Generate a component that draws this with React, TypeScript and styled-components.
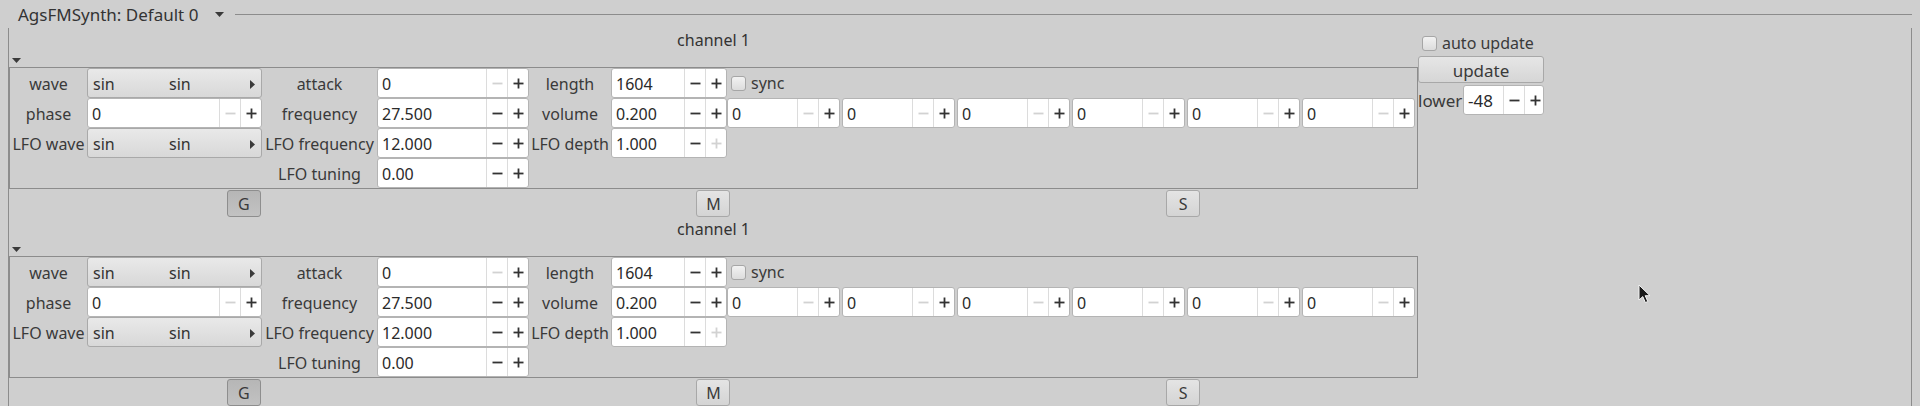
import styled, { createGlobalStyle } from 'styled-components';

const GlobalStyle = createGlobalStyle`
  html, body {
    margin: 0;
    padding: 0;
    background: #cfcfcf;
  }
  body {
    font-family: "Noto Sans", "DejaVu Sans", sans-serif;
    font-size: 16px;
    color: #363636;
  }
`;

const COLS = '77px 175px 115px 152px 82px 116px 1fr';

function Minus({ off }: { off?: boolean }) {
  return (
    <svg width="11" height="11" viewBox="0 0 11 11">
      <line x1="0.5" y1="5.5" x2="10.5" y2="5.5" stroke={off ? '#d2d2d2' : '#333'} strokeWidth="1.8" />
    </svg>
  );
}

function Plus({ off }: { off?: boolean }) {
  const c = off ? '#d2d2d2' : '#333';
  return (
    <svg width="11" height="11" viewBox="0 0 11 11">
      <line x1="0.5" y1="5.5" x2="10.5" y2="5.5" stroke={c} strokeWidth="1.8" />
      <line x1="5.5" y1="0.5" x2="5.5" y2="10.5" stroke={c} strokeWidth="1.8" />
    </svg>
  );
}

function DownCaret() {
  return (
    <svg width="9" height="5" viewBox="0 0 9 5">
      <path d="M0 0 L9 0 L4.5 5 Z" fill="#3a3a3a" />
    </svg>
  );
}

function RightCaret() {
  return (
    <svg width="5" height="9" viewBox="0 0 5 9">
      <path d="M0 0 L5 4.5 L0 9 Z" fill="#3a3a3a" />
    </svg>
  );
}

type SpinProps = {
  value: string;
  minusOff?: boolean;
  plusOff?: boolean;
  width?: number;
  textWidth?: number;
  big?: boolean;
};

function Spin({ value, minusOff, plusOff, width, textWidth, big }: SpinProps) {
  return (
    <SpinBox $width={width}>
      <SpinText $width={textWidth} $big={big}>
        {value}
      </SpinText>
      <StepButton>
        <Minus off={minusOff} />
      </StepButton>
      <StepButton>
        <Plus off={plusOff} />
      </StepButton>
    </SpinBox>
  );
}

function Combo() {
  return (
    <ComboButton>
      <ComboText>sin</ComboText>
      <ComboText $grow>sin</ComboText>
      <RightCaret />
    </ComboButton>
  );
}

function CheckLabel({ text }: { text: string }) {
  return (
    <CheckRow>
      <CheckBox />
      <span>{text}</span>
    </CheckRow>
  );
}

function ChannelBlock() {
  return (
    <Block>
      <ChannelLabel>channel 1</ChannelLabel>
      <ExpanderRow>
        <DownCaret />
      </ExpanderRow>
      <ParamBox>
        <Row>
          <Label>wave</Label>
          <Combo />
          <Label>attack</Label>
          <Spin value="0" minusOff />
          <Label>length</Label>
          <Spin value="1604" />
          <SyncCell>
            <CheckLabel text="sync" />
          </SyncCell>
        </Row>
        <Row>
          <Label>phase</Label>
          <Spin value="0" minusOff />
          <Label>frequency</Label>
          <Spin value="27.500" />
          <Label>volume</Label>
          <Spin value="0.200" />
          <ExtraSpins>
            {[0, 1, 2, 3, 4, 5].map((i) => (
              <Spin key={i} value="0" minusOff width={113} />
            ))}
          </ExtraSpins>
        </Row>
        <Row>
          <Label>LFO wave</Label>
          <Combo />
          <Label>LFO frequency</Label>
          <Spin value="12.000" />
          <Label>LFO depth</Label>
          <Spin value="1.000" plusOff />
          <span />
        </Row>
        <Row>
          <span />
          <span />
          <Label>LFO tuning</Label>
          <Spin value="0.00" />
          <span />
          <span />
          <span />
        </Row>
      </ParamBox>
      <ToggleRow>
        <ToggleButton $pressed>G</ToggleButton>
        <ToggleButton>M</ToggleButton>
        <ToggleButton>S</ToggleButton>
      </ToggleRow>
    </Block>
  );
}

export default function App() {
  return (
    <Page>
      <GlobalStyle />
      <Frame>
        <FrameHead>
          <Title>AgsFMSynth: Default 0</Title>
          <HeadCaret>
            <DownCaret />
          </HeadCaret>
          <HeadLine />
        </FrameHead>
        <FrameBody>
          <Channels>
            <ChannelBlock />
            <ChannelBlock />
          </Channels>
          <SidePanel>
            <AutoRow>
              <CheckLabel text="auto update" />
            </AutoRow>
            <UpdateButton>update</UpdateButton>
            <LowerRow>
              <LowerLabel>lower</LowerLabel>
              <Spin value="-48" width={81} textWidth={40} big />
            </LowerRow>
          </SidePanel>
        </FrameBody>
      </Frame>
      <Cursor>
        <svg width="13" height="20" viewBox="0 0 13 20">
          <path
            d="M1 1 L1 16 L4.8 12.6 L7.4 18.6 L9.8 17.5 L7.2 11.7 L12 11.7 Z"
            fill="#1a1a1a"
            stroke="#f4f4f4"
            strokeWidth="1"
            strokeLinejoin="round"
          />
        </svg>
      </Cursor>
    </Page>
  );
}

const Page = styled.div`
  position: relative;
  width: 1920px;
  height: 406px;
  overflow: hidden;
  padding-left: 8px;
  box-sizing: border-box;
`;

const Frame = styled.div`
  display: flex;
  flex-direction: column;
  width: 1904px;
`;

const FrameHead = styled.div`
  display: flex;
  align-items: center;
  height: 28px;
`;

const Title = styled.span`
  margin-left: 10px;
  font-size: 17px;
  white-space: nowrap;
  color: #333;
`;

const HeadCaret = styled.span`
  display: flex;
  margin-left: 17px;
  margin-right: 11px;
`;

const HeadLine = styled.div`
  flex: 1;
  border-top: 1px solid #8c8c8c;
  margin-top: 1px;
`;

const FrameBody = styled.div`
  display: flex;
  border-left: 1px solid #8c8c8c;
  border-right: 1px solid #8c8c8c;
  height: 378px;
`;

const Channels = styled.div`
  display: flex;
  flex-direction: column;
  width: 1409px;
`;

const Block = styled.div`
  display: flex;
  flex-direction: column;
  height: 189px;
`;

const ChannelLabel = styled.div`
  height: 24px;
  line-height: 25px;
  text-align: center;
  color: #333;
`;

const ExpanderRow = styled.div`
  height: 15px;
  display: flex;
  align-items: flex-start;
  padding: 6px 0 0 3px;
  box-sizing: border-box;
`;

const ParamBox = styled.div`
  height: 122px;
  box-sizing: border-box;
  border: 1px solid #8c8c8c;
  display: flex;
  flex-direction: column;
`;

const Row = styled.div`
  display: grid;
  grid-template-columns: ${COLS};
  height: 30px;
  align-items: start;
`;

const Label = styled.div`
  height: 30px;
  line-height: 32px;
  text-align: center;
  white-space: nowrap;
  color: #3a3a3a;
`;

const SpinBox = styled.div<{ $width?: number }>`
  display: flex;
  box-sizing: border-box;
  height: 30px;
  width: ${(p) => (p.$width ? `${p.$width}px` : '100%')};
  background: #ffffff;
  border: 1px solid #b4b4b4;
  border-radius: 3px;
`;

const SpinText = styled.div<{ $width?: number; $big?: boolean }>`
  flex: ${(p) => (p.$width ? 'none' : '1')};
  width: ${(p) => (p.$width ? `${p.$width - 1}px` : 'auto')};
  padding-left: 4px;
  box-sizing: border-box;
  font-size: ${(p) => (p.$big ? '17px' : '16px')};
  line-height: 30px;
  color: #2a2a2a;
  overflow: hidden;
  white-space: nowrap;
`;

const StepButton = styled.div`
  width: 20px;
  flex: none;
  display: flex;
  align-items: center;
  justify-content: center;
  border-left: 1px solid #dcdcdc;
`;

const ComboButton = styled.div`
  display: flex;
  align-items: center;
  box-sizing: border-box;
  height: 30px;
  padding: 2px 6px 0 5px;
  background: linear-gradient(#e9e9e9, #d8d8d8);
  border: 1px solid #a9a9a9;
  border-radius: 3px;
  color: #333;
`;

const ComboText = styled.span<{ $grow?: boolean }>`
  width: ${(p) => (p.$grow ? 'auto' : '76px')};
  flex: ${(p) => (p.$grow ? '1' : 'none')};
`;

const SyncCell = styled.div`
  height: 30px;
  display: flex;
  align-items: center;
  padding-left: 4px;
`;

const CheckRow = styled.label`
  display: flex;
  align-items: center;
  gap: 5px;
  color: #3a3a3a;
  white-space: nowrap;
`;

const CheckBox = styled.span`
  display: inline-block;
  width: 15px;
  height: 15px;
  box-sizing: border-box;
  border: 1px solid #a6a6a6;
  border-radius: 3px;
  background: linear-gradient(#f2f2f2, #dcdcdc);
`;

const ExtraSpins = styled.div`
  display: flex;
  gap: 2px;
`;

const ToggleRow = styled.div`
  display: grid;
  grid-template-columns: 1fr 1fr 1fr;
  justify-items: center;
  height: 28px;
  padding-top: 1px;
  box-sizing: border-box;
`;

const ToggleButton = styled.div<{ $pressed?: boolean }>`
  width: 34px;
  height: 27px;
  box-sizing: border-box;
  display: flex;
  align-items: center;
  justify-content: center;
  padding-top: 1px;
  border-radius: 3px;
  border: 1px solid ${(p) => (p.$pressed ? '#8e8e8e' : '#a8a8a8')};
  background: ${(p) =>
    p.$pressed ? 'linear-gradient(#b6b6b6, #c2c2c2)' : 'linear-gradient(#e4e4e4, #d4d4d4)'};
  color: #3a3a3a;
`;

const SidePanel = styled.div`
  display: flex;
  flex-direction: column;
  width: 126px;
  padding-top: 5px;
`;

const AutoRow = styled.div`
  height: 20px;
  display: flex;
  align-items: center;
  padding-left: 4px;
`;

const UpdateButton = styled.div`
  margin-top: 3px;
  height: 27px;
  box-sizing: border-box;
  display: flex;
  align-items: center;
  justify-content: center;
  padding-top: 1px;
  border: 1px solid #a8a8a8;
  border-radius: 3px;
  background: linear-gradient(#e6e6e6, #d6d6d6);
  color: #3a3a3a;
  font-size: 17px;
`;

const LowerRow = styled.div`
  margin-top: 2px;
  display: flex;
  align-items: center;
  gap: 1px;
`;

const LowerLabel = styled.span`
  width: 44px;
  font-size: 17px;
  color: #3a3a3a;
`;

const Cursor = styled.div`
  position: absolute;
  left: 1638px;
  top: 284px;
  display: flex;
`;
